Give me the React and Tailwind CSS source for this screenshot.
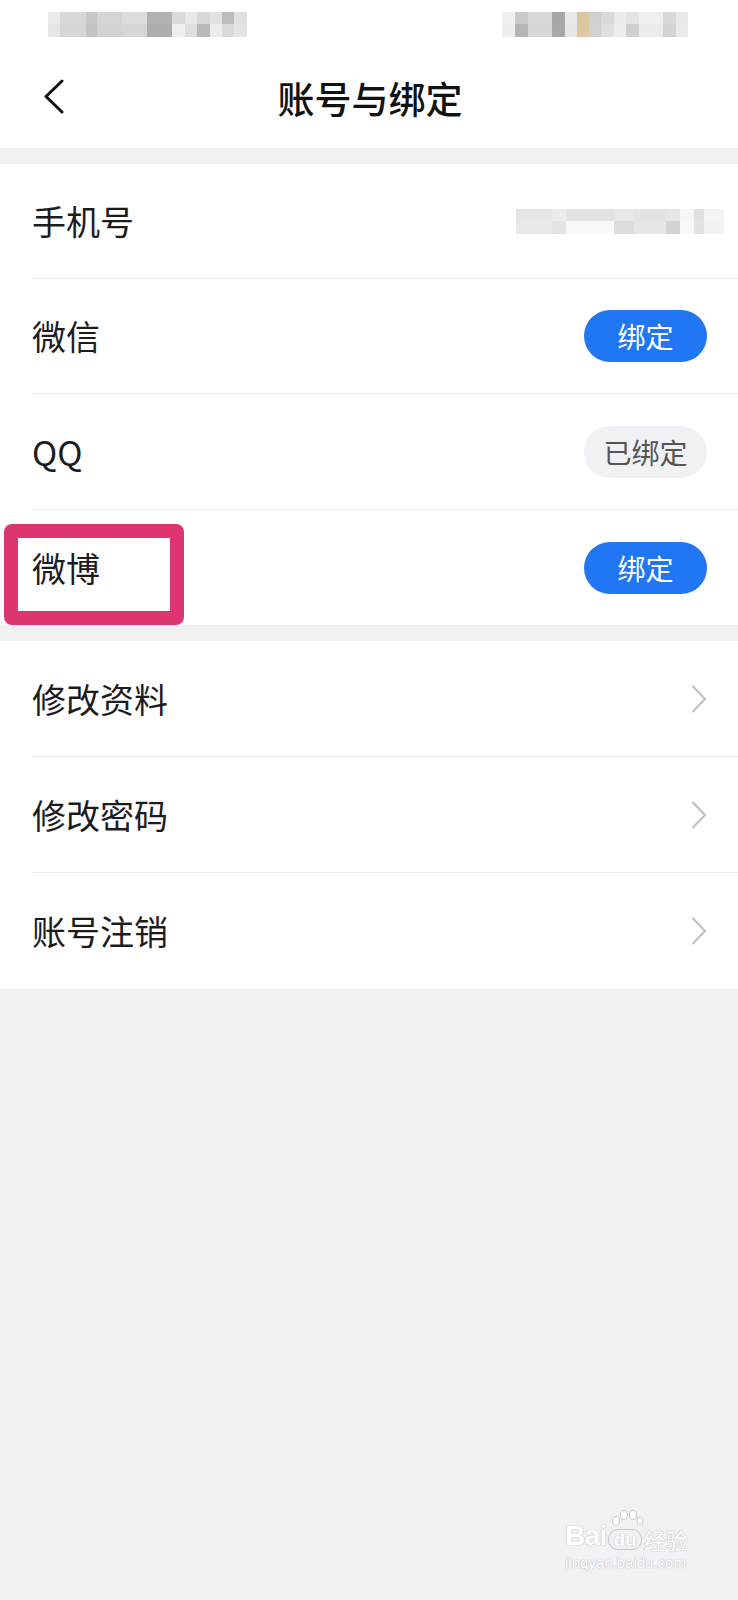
import React from 'react';

const font = { fontFamily: '"Noto Sans CJK SC", "Noto Sans", sans-serif' };

const leftMosaic = [
  ['w-[12px]', 'bg-[#ebebeb]', 'bg-[#e6e6e6]'],
  ['w-[26px]', 'bg-[#d8d8d8]', 'bg-[#d6d6d6]'],
  ['w-[11px]', 'bg-[#c8c8c8]', 'bg-[#c4c4c4]'],
  ['w-[25px]', 'bg-[#d5d5d5]', 'bg-[#d2d2d2]'],
  ['w-[25px]', 'bg-[#dcdcdc]', 'bg-[#d6d6d6]'],
  ['w-[25px]', 'bg-[#b2b2b2]', 'bg-[#aeaeae]'],
  ['w-[13px]', 'bg-[#dadada]', 'bg-[#efefef]'],
  ['w-[12px]', 'bg-[#e8e8e8]', 'bg-[#dedede]'],
  ['w-[13px]', 'bg-[#d8d8d8]', 'bg-[#b8b8b8]'],
  ['w-[12px]', 'bg-[#e2e2e2]', 'bg-[#ececec]'],
  ['w-[12px]', 'bg-[#bcbcbc]', 'bg-[#dadada]'],
  ['w-[13px]', 'bg-[#e0e0e0]', 'bg-[#e4e4e4]'],
];

const rightMosaic = [
  ['w-[13px]', 'bg-[#efefef]', 'bg-[#eeeeee]'],
  ['w-[13px]', 'bg-[#cacaca]', 'bg-[#b5b5b5]'],
  ['w-[24px]', 'bg-[#d8d8d8]', 'bg-[#d6d6d6]'],
  ['w-[13px]', 'bg-[#a6a6a6]', 'bg-[#a8a8a8]'],
  ['w-[12px]', 'bg-[#e8e8e8]', 'bg-[#e6e6e6]'],
  ['w-[12px]', 'bg-[#dcc8a0]', 'bg-[#dcc9a4]'],
  ['w-[12px]', 'bg-[#d0d0d0]', 'bg-[#d2d2d2]'],
  ['w-[13px]', 'bg-[#dadada]', 'bg-[#e0e0e0]'],
  ['w-[12px]', 'bg-[#ebebeb]', 'bg-[#ededed]'],
  ['w-[13px]', 'bg-[#e4e4e4]', 'bg-[#d0d0d0]'],
  ['w-[24px]', 'bg-[#efefef]', 'bg-[#ececec]'],
  ['w-[13px]', 'bg-[#d8d8d8]', 'bg-[#d4d4d4]'],
  ['w-[12px]', 'bg-[#e8e8e8]', 'bg-[#eaeaea]'],
];

const phoneMosaic = [
  ['w-[36px]', 'bg-[#e6e6e6]', 'bg-[#e8e8e8]'],
  ['w-[14px]', 'bg-[#ececec]', 'bg-[#e4e4e4]'],
  ['w-[48px]', 'bg-[#e3e3e3]', 'bg-[#f8f8f8]'],
  ['w-[20px]', 'bg-[#e8e8e8]', 'bg-[#dcdcdc]'],
  ['w-[32px]', 'bg-[#e4e4e4]', 'bg-[#e6e6e6]'],
  ['w-[14px]', 'bg-[#e6e6e6]', 'bg-[#d4d4d4]'],
  ['w-[14px]', 'bg-[#f6f6f6]', 'bg-[#f8f8f8]'],
  ['w-[10px]', 'bg-[#e0e0e0]', 'bg-[#e2e2e2]'],
  ['w-[20px]', 'bg-[#f4f4f4]', 'bg-[#f2f2f2]'],
];

function Mosaic({ cells }) {
  return (
    <div className="flex blur-[0.6px]">
      {cells.map(([w, top, bottom], i) => (
        <div key={i} className={`${w} flex flex-col`}>
          <div className={`h-[12px] ${top}`} />
          <div className={`h-[13px] ${bottom}`} />
        </div>
      ))}
    </div>
  );
}

function Chevron() {
  return (
    <svg width="16" height="28" viewBox="0 0 16 28" fill="none">
      <path d="M2 1.5 L14 14 L2 26.5" stroke="#c2c2c6" strokeWidth="2.2" strokeLinecap="round" strokeLinejoin="round" />
    </svg>
  );
}

function Row({ label, last, h = 'h-[115px]', children }) {
  return (
    <div className="pl-[32px] bg-white">
      <div className={`${h} flex items-center justify-between pr-[31px] ${last ? '' : 'border-b border-[#ececef]'}`}>
        <span className="text-[34px] leading-none text-[#1c1c1e]">{label}</span>
        {children}
      </div>
    </div>
  );
}

function BindButton() {
  return (
    <div className="w-[123px] h-[52px] rounded-full bg-[#2176f3] flex items-center justify-center text-[28px] text-white leading-none">
      绑定
    </div>
  );
}

function BoundTag() {
  return (
    <div className="w-[123px] h-[52px] rounded-full bg-[#f0f1f4] flex items-center justify-center text-[28px] text-[#555558] leading-none">
      已绑定
    </div>
  );
}

const outline = '[text-shadow:0_0_1px_#c4c6cc,0_0_1px_#c4c6cc,0_0_1px_#c4c6cc]';

export default function App() {
  return (
    <div className="min-h-[1600px] bg-[#f0f1f5] relative" style={font}>
      <div className="bg-white h-[148px]">
        <div className="h-[48px] flex justify-between items-start pt-[12px] pl-[48px] pr-[50px]">
          <Mosaic cells={leftMosaic} />
          <Mosaic cells={rightMosaic} />
        </div>
        <div className="h-[100px] flex items-center relative">
          <div className="pl-[42px] pb-[2px]">
            <svg width="24" height="36" viewBox="0 0 24 36" fill="none">
              <path d="M20 2 L4 17.5 L20 33" stroke="#111" strokeWidth="3" strokeLinecap="round" strokeLinejoin="round" />
            </svg>
          </div>
          <div className="absolute inset-x-0 top-0 h-[100px] flex items-center justify-center pointer-events-none">
            <span className="text-[37px] font-medium text-[#111] leading-none pl-[2px]">账号与绑定</span>
          </div>
        </div>
      </div>

      <div className="mt-[16px] bg-white">
        <Row label="手机号">
          <div className="-mr-[17px]">
            <Mosaic cells={phoneMosaic} />
          </div>
        </Row>
        <Row label="微信">
          <BindButton />
        </Row>
        <Row label="QQ" h="h-[116px]">
          <BoundTag />
        </Row>
        <Row label="微博" last>
          <BindButton />
        </Row>
      </div>

      <div className="mt-[16px] bg-white">
        <Row label="修改资料" h="h-[116px]">
          <Chevron />
        </Row>
        <Row label="修改密码" h="h-[116px]">
          <Chevron />
        </Row>
        <Row label="账号注销" h="h-[116px]" last>
          <Chevron />
        </Row>
      </div>

      {/* annotation box around 微博 */}
      <div className="absolute left-[4px] top-[524px] w-[180px] h-[101px] border-[14px] border-[#dc3572] rounded-[8px]" />

      {/* watermark */}
      <div className="absolute left-[565px] top-[1522px] flex flex-col items-start whitespace-nowrap">
        <div className="flex items-end leading-none">
          <span className={`text-[28px] font-bold text-white tracking-tight ${outline}`} style={{ fontFamily: '"Liberation Sans", sans-serif' }}>Bai</span>
          <div className="relative ml-[2px]">
            <svg width="36" height="24" viewBox="0 0 36 24" className="absolute -top-[20px] left-0">
              <ellipse cx="8" cy="12" rx="3.5" ry="4.5" fill="white" stroke="#c4c6cc" strokeWidth="1" />
              <ellipse cx="16" cy="6" rx="3.5" ry="4.5" fill="white" stroke="#c4c6cc" strokeWidth="1" />
              <ellipse cx="25" cy="6" rx="3.5" ry="4.5" fill="white" stroke="#c4c6cc" strokeWidth="1" />
              <ellipse cx="32" cy="12" rx="3" ry="4" fill="white" stroke="#c4c6cc" strokeWidth="1" />
            </svg>
            <span className={`relative block text-[19px] font-bold text-white px-[4px] border-[1.5px] border-[#c4c6cc] rounded-[10px] ${outline}`} style={{ fontFamily: '"Liberation Sans", sans-serif' }}>du</span>
          </div>
          <span className={`ml-[2px] text-[22px] text-white ${outline}`}>经验</span>
        </div>
        <span className={`text-[15px] text-white leading-none mt-[5px] ${outline}`} style={{ fontFamily: '"Liberation Sans", sans-serif' }}>jingyan.baidu.com</span>
      </div>
    </div>
  );
}
